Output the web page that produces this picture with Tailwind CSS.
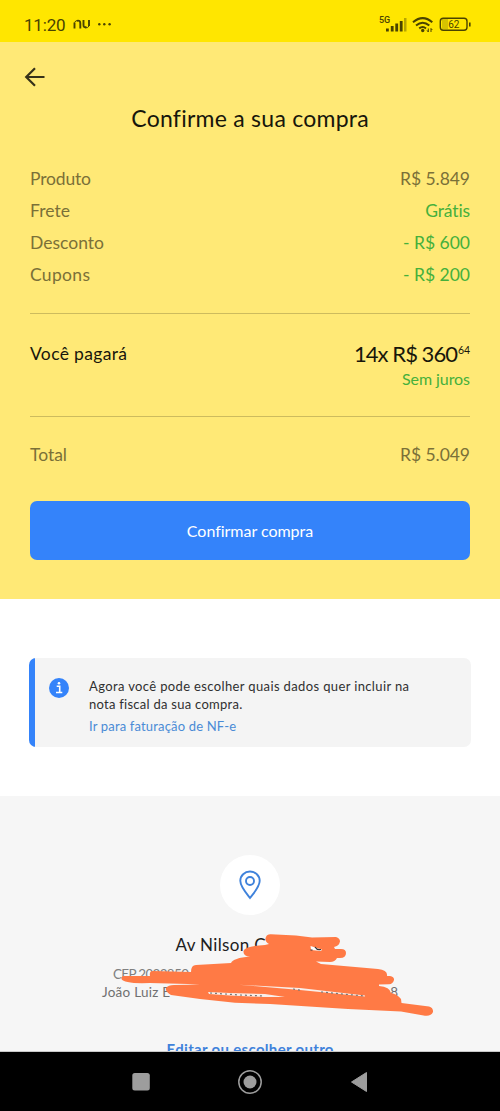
<!DOCTYPE html>
<html lang="pt-BR">
<head>
<meta charset="utf-8">
<title>Confirme a sua compra</title>
<script src="https://cdn.jsdelivr.net/npm/@tailwindcss/browser@4"></script>
</head>
<body class="w-[500px] h-[1111px] overflow-hidden flex flex-col bg-white font-['Lato',sans-serif]">
<header class="h-[42px] shrink-0 bg-[#ffe600] flex items-start justify-between pl-[24px] pr-[28px] pt-[15px] text-[#4a4300]">
  <div class="flex items-start">
    <span class="font-['Roboto',sans-serif] text-[17px] leading-[21px] tracking-[-0.2px] w-[49px] whitespace-nowrap">11:20</span>
    <svg class="mt-[4px]" width="40" height="12" viewBox="0 0 40 12" fill="none" stroke="currentColor"><path d="M1.500 9.500V3.500M4 1.800Q7.300 1 7.300 4.500V9.500M10.500 1V6Q10.500 9 13.500 8M16 1V7" stroke-width="1.900"/><path d="M1.500 3.500Q2.500 1.200 5 1.600M12 8.800Q15 9.300 16 7" stroke-width="1"/><g fill="currentColor" stroke="none"><circle cx="26.300" cy="5.300" r="1.200"/><circle cx="31.300" cy="5.300" r="1.200"/><circle cx="36.600" cy="5.300" r="1.200"/></g></svg>
  </div>
  <div class="flex items-start">
    <span class="font-['Roboto',sans-serif] font-medium text-[9px] leading-[11px] w-[6px]">5G</span>
    <svg class="mt-[2px]" width="87" height="16" viewBox="0 0 87 16" fill="currentColor"><rect x="1" y="11.500" width="2.800" height="3"/><rect x="5.800" y="9" width="2.800" height="5.500"/><rect x="10.300" y="6.500" width="2.800" height="8"/><rect x="14.800" y="4" width="2.800" height="10.500"/><rect x="19" y="1" width="2.500" height="13.500" opacity=".4"/>
      <g fill="none" stroke="currentColor" stroke-width="2"><path d="M28 5.200Q37.700 -3 47.300 5.200M31 8.600Q37.700 3 44.300 8.600M34.200 11.400Q37.700 8.600 41 11.400"/></g><circle cx="37.700" cy="13.500" r="1.700"/><path d="M43.300 11.500v3.500M46 11.500v3.500M42 13.300l1.300 1.700M47.300 13l-1.300-1.500" stroke="currentColor" stroke-width="1"/>
      <rect x="57" y="2" width="6" height="10" opacity=".22"/><rect x="55.300" y="1.300" width="26.700" height="12" rx="3" fill="none" stroke="currentColor" stroke-width="1.400"/><rect x="84" y="5.500" width="1.600" height="4"/><text x="68.800" y="11.300" text-anchor="middle" font-family="Roboto" font-size="10">62</text></svg>
  </div>
</header>
<main class="h-[557px] shrink-0 bg-[#ffe976] px-[30px] pt-[24px] text-[17.500px] text-[#7a7038]">
  <svg class="ml-[-6px]" width="22" height="22" viewBox="0 0 22 22" fill="none" stroke="#373219" stroke-width="2.200"><path d="M20.500 11H2.500M11 2.200L2.200 11L11 19.800"/></svg>
  <h1 class="mt-[14px] h-[32px] leading-[32px] text-center text-[23px] text-[#17160b]"><span data-w="237" class="inline-block whitespace-nowrap">Confirme a sua compra</span></h1>
  <dl class="mt-[29px] leading-[32px]">
    <div class="flex justify-between"><dt><span data-w="61">Produto</span></dt><dd><span data-w="70">R$ 5.849</span></dd></div>
    <div class="flex justify-between"><dt><span data-w="40">Frete</span></dt><dd class="text-[#45b03c]"><span data-w="45">Grátis</span></dd></div>
    <div class="flex justify-between"><dt><span data-w="74">Desconto</span></dt><dd class="text-[#45b03c]"><span data-w="67">- R$ 600</span></dd></div>
    <div class="flex justify-between"><dt><span data-w="60">Cupons</span></dt><dd class="text-[#45b03c]"><span data-w="67">- R$ 200</span></dd></div>
  </dl>
  <hr class="mt-[22px] border-0 h-px bg-[#cdbb5e]">
  <div class="mt-[24px] flex justify-between leading-[32px] text-[#17160b]"><span data-w="97">Você pagará</span><span class="flex text-[22px]"><span data-w="104">14x R$ 360</span><span data-w="12" class="text-[10.500px] leading-[24px]">64</span></span></div>
  <div class="text-right leading-[18px] h-[20px] text-[16px] text-[#45b03c]"><span data-w="68">Sem juros</span></div>
  <hr class="mt-[26px] border-0 h-px bg-[#cdbb5e]">
  <div class="mt-[22px] flex justify-between leading-[32px]"><span data-w="37">Total</span><span data-w="70">R$ 5.049</span></div>
  <button class="mt-[30px] w-full h-[59px] rounded-[7px] bg-[#3483fa] text-white text-[16px] leading-[57px] block"><span data-w="126">Confirmar compra</span></button>
</main>
<section class="h-[197px] shrink-0 px-[29px] pt-[59px]">
  <div class="h-[89px] w-[442px] rounded-[7px] overflow-hidden bg-[#f4f4f4] flex">
    <div class="w-[6px] bg-[#3483fa]"></div>
    <svg class="ml-[14px] mt-[20px]" width="20" height="20" viewBox="0 0 20 20"><circle cx="10" cy="10" r="10" fill="#3483fa"/><path d="M7.700 8.200H10.700V14.300M7 14.500H13.300" fill="none" stroke="white" stroke-width="1.600"/><circle cx="10" cy="5.300" r="1.300" fill="white"/></svg>
    <div class="ml-[20px] pt-[20px] text-[13px] leading-[17.500px] text-[#303030]">
      <p><span data-w="320">Agora você pode escolher quais dados quer incluir na</span></p>
      <p><span data-w="153">nota fiscal da sua compra.</span></p>
      <p class="mt-[5px] text-[#4a8bd6]"><span data-w="147">Ir para faturação de NF-e</span></p>
    </div>
  </div>
</section>
<section class="relative h-[256px] shrink-0 bg-[#f6f6f6] overflow-hidden flex flex-col items-center pt-[59px] border-b border-[#c8c8c8]">
  <div class="size-[60px] shrink-0 rounded-full bg-white flex items-center justify-center"><svg width="24" height="32" viewBox="0 0 24 32" fill="none" stroke="#3f82db" stroke-width="1.900"><path d="M12 29C8 24 2.300 17.500 2.300 11.800A9.700 9.300 0 0 1 21.700 11.800C21.700 17.500 16 24 12 29Z"/><circle cx="12" cy="12" r="4"/></svg></div>
  <p class="mt-[18px] w-[149px] text-[17px] leading-[24px] text-[#202020]"><span data-w="90">Av Nilson C</span></p>
  <p class="mt-[8px] w-[274px] text-[13.500px] leading-[18px] text-[#808080]"><span data-w="76">CEP 2022850</span></p>
  <p class="w-[296px] flex justify-between text-[13.500px] leading-[18px] text-[#707070]"><span data-w="68">João Luiz E</span><span>8</span></p>
  <p class="mt-[36px] text-[15px] leading-[24px] font-bold text-[#3f82db] whitespace-nowrap"><span data-w="167">Editar ou escolher outro</span></p>
  <svg class="absolute left-[100px] top-[134px]" width="340" height="90" viewBox="100 930 340 90">
    <path fill="#ff7a45" d="M124 976L150 976Q149 971 153 971L191 972Q191 965 196 965L231 963Q233 958 250 956.500Q243 956 243.500 951Q245 946 265 945L269 944Q264 941 266 937Q267 934 271 934.300L296 935.500L312 937.500L336 937Q340 938 340 941.500Q339 946 334 947L335 949H341Q346 949 346 953Q346 958 340 958H337Q335 962 330 962L316 961.500L321 964L378 969Q388 970 387 976H390Q394.500 977 394 980Q393 984 389 984.300L379 984.500V986Q390 987 391 993Q397 994 401 999L401.500 1003L429 1006.500Q433.500 1008 433 1012Q431 1016.500 425 1015.700L401 1011.500L348 1009L270 1004L235 1002.800L200 999L171 995Q165 992 166 988Q168 985 174 985L200 984.500L188 984L150 983Q124 984 121.500 979Q121 976 124 976Z"/>
    <path fill="#f9eee9" d="M239 984.800L300 988L365 995.500V996.500L300 990ZM208 992L230 993L265 994L285 997L264 997L230 995.500L209 994Z"/>
    <path fill="#fff" d="M310.500 946L322 949.500L321 951L311 950Z"/>
    <g fill="none" stroke="#333" stroke-width="1.200"><path d="M315 947Q317 950.500 321 949.500M310.500 950h2"/></g>
    <path fill="none" stroke="#777" stroke-width="1.200" stroke-dasharray="2 3" d="M210 993L240 995L264 996M293 989L302 990.500M321 992L364 996"/>
  </svg>
</section>
<nav class="h-[59px] shrink-0 bg-black flex items-center">
  <svg width="500" height="59" viewBox="0 0 500 59" fill="#9d9d9d"><rect x="132.300" y="21" width="17.500" height="17.500" rx="2.500"/><circle cx="250" cy="30" r="6.500"/><circle cx="250" cy="30" r="11.200" fill="none" stroke="#9d9d9d" stroke-width="1.500"/><path d="M351.500 30L366.500 20.500V39.500Z" stroke="#9d9d9d" stroke-linejoin="round"/></svg>
</nav>
<script>
/* Tracks each label out or in to its design width, once styles and fonts are ready. */
function fitLabels() {
  document.querySelectorAll('[data-w]').forEach(function (el) {
    el.style.whiteSpace = 'nowrap';
    el.style.letterSpacing = '0px';
    var r = document.createRange();
    r.selectNodeContents(el);
    var n = el.textContent.length;
    var s = (el.dataset.w - r.getBoundingClientRect().width) / (n - 1);
    el.style.letterSpacing = s + 'px';
    el.style.marginRight = -s + 'px';
  });
}
window.addEventListener('load', function () {
  fitLabels();
  document.fonts.ready.then(fitLabels);
  setTimeout(fitLabels, 100);
});
</script>
</body>
</html>
